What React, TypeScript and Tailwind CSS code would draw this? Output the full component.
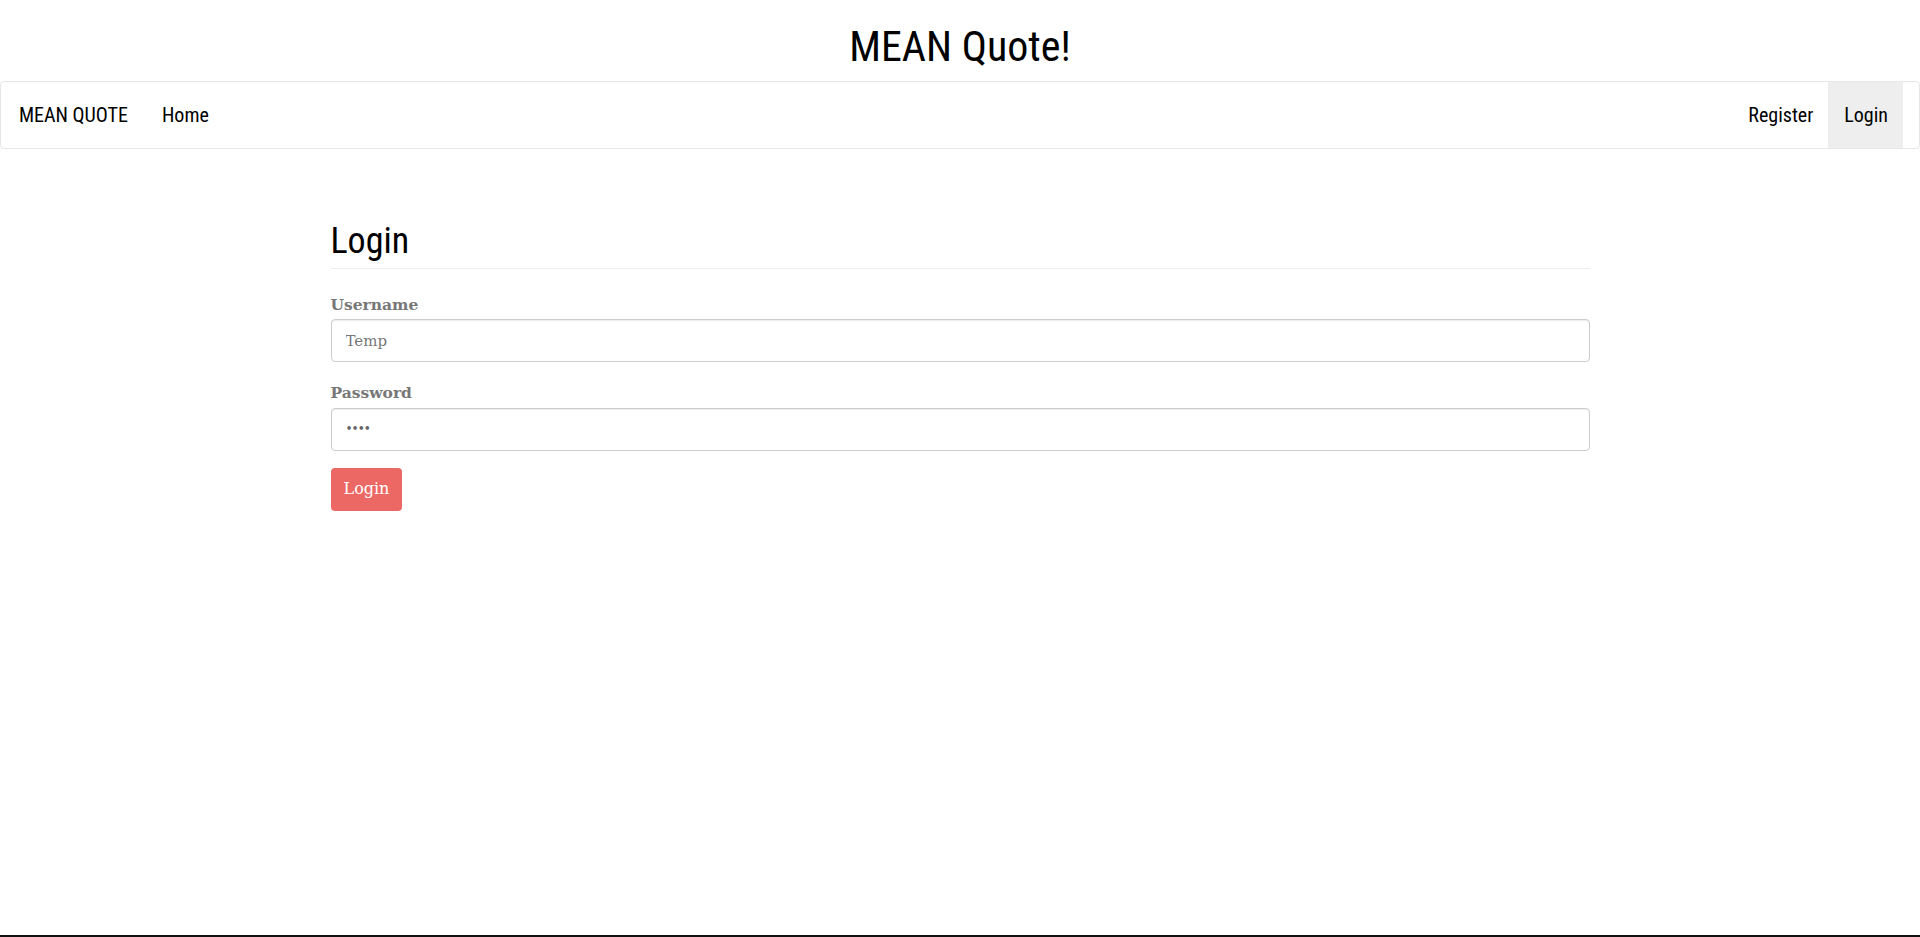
import { useState } from "react";

const head = { fontFamily: '"Liberation Sans Narrow", "Roboto Condensed", "Liberation Sans", sans-serif' };
const body = { fontFamily: '"DejaVu Serif", Georgia, "Liberation Serif", serif' };

export default function App() {
    const [username, setUsername] = useState("");
    const [password, setPassword] = useState("1234");

    return (
        <div className="min-h-[937px] flex flex-col bg-white text-black" style={body}>
            <h1 className="text-center text-[42px] leading-none pt-[26px] pb-[13px]" style={head}>
                MEAN Quote!
            </h1>

            {/* navbar */}
            <nav
                className="h-[68px] border border-[#e7e7e7] rounded-[4px] flex items-stretch justify-between pr-[16px] text-[20px]"
                style={head}
            >
                <div className="flex items-center">
                    <span className="pl-[18px] pr-[34px]">MEAN QUOTE</span>
                    <span>Home</span>
                </div>
                <div className="flex items-stretch">
                    <span className="flex items-center px-[15px]">Register</span>
                    <span className="flex items-center pl-[16px] pr-[15px] bg-[#eeeeee]">Login</span>
                </div>
            </nav>

            <main className="w-[1259px] mx-auto pt-[71px]">
                <h2 className="text-[36px] leading-none pb-[9px] border-b border-[#eeeeee] pt-[3px]" style={head}>
                    Login
                </h2>

                <label className="block mt-[24px] mb-[3px] text-[15.5px] font-bold text-[#777777]">Username</label>
                <input
                    value={username}
                    onChange={(e) => setUsername(e.target.value)}
                    placeholder="Temp"
                    className="w-full h-[43px] px-[14px] border border-[#cccccc] rounded-[4px] text-[15px] text-[#555] placeholder:text-[#777] shadow-[inset_0_1px_1px_rgba(0,0,0,0.075)] outline-none"
                    style={body}
                />

                <label className="block mt-[19px] mb-[3px] text-[15.5px] font-bold text-[#777777]">Password</label>
                <input
                    type="password"
                    value={password}
                    onChange={(e) => setPassword(e.target.value)}
                    className="w-full h-[43px] px-[14px] border border-[#cccccc] rounded-[4px] text-[12px] tracking-[-1px] text-[#666] shadow-[inset_0_1px_1px_rgba(0,0,0,0.075)] outline-none"
                    style={body}
                />

                <button
                    className="mt-[17px] h-[43px] px-[13px] bg-[#eb6864] text-white text-[16px] rounded-[4px]"
                    style={body}
                >
                    Login
                </button>
            </main>

            <div className="mt-auto h-[2px] bg-[#111]" />
        </div>
    );
}
